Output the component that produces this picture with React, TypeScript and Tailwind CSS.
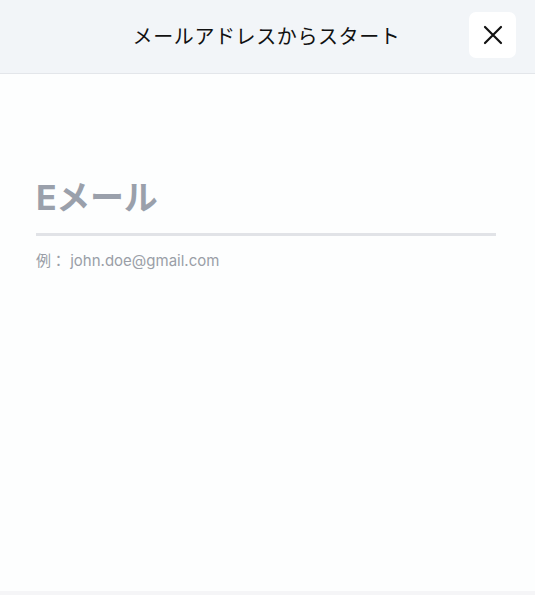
import React from "react";

export default function App() {
  return (
    <div
      className="w-[535px] h-[595px] flex flex-col bg-[#fdfefe] overflow-hidden"
      style={{ fontFamily: '"Inter", "Noto Sans CJK JP", sans-serif' }}
    >
      <header className="h-[74px] shrink-0 bg-[#f2f5f8] border-b border-[#e3e6ea] relative flex items-center justify-center">
        <h1 className="text-[20px] text-[#111] tracking-[0.6px] font-normal pr-[2px]">メールアドレスからスタート</h1>
        <button className="absolute right-[19px] top-[12px] w-[47px] h-[46px] rounded-[7px] bg-white flex items-center justify-center">
          <svg width="20" height="20" viewBox="0 0 20 20" fill="none" stroke="#111" strokeWidth="2.2" strokeLinecap="round">
            <path d="M2 2 L18 18 M18 2 L2 18" />
          </svg>
        </button>
      </header>
      <main className="flex-1 pl-[36px] pr-[39px] pt-[104px]">
        <div className="border-b-[3px] border-[#e1e3e7] pb-[15px]">
          <div className="text-[34px] leading-[40px] font-bold text-[#9aa0ab] tracking-[-0.3px]">Eメール</div>
        </div>
        <div className="mt-[14px] text-[15px] text-[#9a9ea7]">例： john.doe@gmail.com</div>
      </main>
      <div className="h-[4px] bg-[#f5f5f7] shrink-0" />
    </div>
  );
}
